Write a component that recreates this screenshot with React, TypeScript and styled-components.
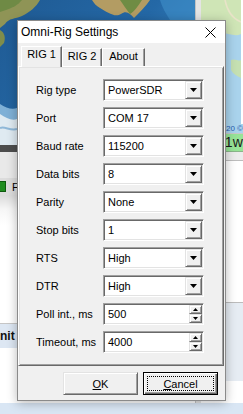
import styled, { createGlobalStyle } from "styled-components";

//types
type FieldKind = "combo" | "spin";
type FieldDef = {
  label: string;
  value: string;
  kind: FieldKind;
};

const fields: Array<FieldDef> = [
  { label: "Rig type", value: "PowerSDR", kind: "combo" },
  { label: "Port", value: "COM 17", kind: "combo" },
  { label: "Baud rate", value: "115200", kind: "combo" },
  { label: "Data bits", value: "8", kind: "combo" },
  { label: "Parity", value: "None", kind: "combo" },
  { label: "Stop bits", value: "1", kind: "combo" },
  { label: "RTS", value: "High", kind: "combo" },
  { label: "DTR", value: "High", kind: "combo" },
  { label: "Poll int., ms", value: "500", kind: "spin" },
  { label: "Timeout, ms", value: "4000", kind: "spin" },
];

const tabs = [
  { title: "RIG 1", width: 41, active: true },
  { title: "RIG 2", width: 40, active: false },
  { title: "About", width: 43, active: false },
];

//styles
const GlobalStyle = createGlobalStyle`
  html, body {
    margin: 0;
    padding: 0;
    background: #fff;
  }
  body {
    font-family: "Liberation Sans", Arial, sans-serif;
  }
`;

const Screen = styled.div`
  position: relative;
  width: 243px;
  height: 414px;
  overflow: hidden;
  display: flex;
  flex-direction: column;
  background: #fff;
`;
const Desk = styled.div`
  display: flex;
  height: 403px;
`;
const LeftPane = styled.div`
  width: 195px;
  display: flex;
  flex-direction: column;
`;
const Splitter = styled.div`
  width: 8px;
  background: #e4e4e4;
  border-left: 1px solid #c2c2c2;
  box-sizing: border-box;
`;
const RightPane = styled.div`
  flex: 1;
  display: flex;
  flex-direction: column;
`;
const MapArt = styled.svg`
  display: block;
  flex: none;
`;
const DarkBar = styled.div`
  height: 7px;
  background: #4d4d4d;
`;
const ToolArea = styled.div`
  height: 26px;
  background: #e9e9e9;
`;
const StatusRow = styled.div`
  height: 17px;
  display: flex;
  align-items: center;
  gap: 6px;
  background: #dcdcdc;
  font-size: 11px;
  color: #000;
`;
const LedBox = styled.span`
  width: 6px;
  height: 11px;
  box-sizing: border-box;
  background: #1f8c1f;
  border: 1px solid #0d5a0d;
  border-left: none;
`;
const ShadeArea = styled.div`
  height: 128px;
  background: linear-gradient(#dadada, #f6f6f6 14px, #fff 30px);
  border-bottom: 1px solid #c6c6c6;
`;
const InfoBand = styled.div<{ $h: number }>`
  height: ${(p) => p.$h}px;
  display: flex;
  align-items: center;
  background: #dde7f3;
  font-size: 12px;
  font-weight: bold;
  color: #111;
`;
const Blank = styled.div`
  flex: 1;
  background: #fff;
`;
const MapCaption = styled.div`
  height: 9px;
  background: #a9d3ec;
  padding-left: 16px;
  font-size: 8px;
  line-height: 9px;
  color: #2a5db0;
  white-space: nowrap;
`;
const GreenRow = styled.div`
  height: 19px;
  background: #e6e6e6;
  display: flex;
  align-items: stretch;
`;
const GreenCell = styled.div`
  margin-left: 16px;
  flex: 1;
  background: #97e497;
  border-top: 1px solid #c8c8c8;
  border-bottom: 1px solid #8ab58a;
  font-size: 14px;
  line-height: 17px;
  color: #1a1a1a;
  white-space: nowrap;
`;
const GreyStrip = styled.div`
  height: 8px;
  background: #ececec;
  border-bottom: 1px solid #bdbdbd;
`;
const WhiteGap = styled.div<{ $h: number }>`
  height: ${(p) => p.$h}px;
  background: #fff;
  border-bottom: 1px solid #bcbcbc;
`;
const PaleBand = styled.div`
  height: 78px;
  background: #e6ecf3;
`;
const BottomBand = styled.div`
  height: 11px;
  background: #d9e6f4;
`;

// dialog
const Dialog = styled.div`
  position: absolute;
  left: 17px;
  top: 20px;
  width: 209px;
  box-sizing: border-box;
  border: 1px solid #8a8a8a;
  background: #f0f0f0;
  box-shadow: 0 2px 10px rgba(0, 0, 0, 0.28);
  display: flex;
  flex-direction: column;
  font-family: "Liberation Sans", Arial, sans-serif;
  color: #000;
`;
const TitleBar = styled.div`
  height: 22px;
  background: #fff;
  display: flex;
  align-items: center;
  justify-content: space-between;
  padding: 0 9px 0 3px;
`;
const Title = styled.span`
  font-size: 12px;
  color: #000;
`;
const CloseIcon = styled.svg`
  display: block;
  margin-top: 1px;
`;
const TabStrip = styled.div`
  position: relative;
  z-index: 1;
  height: 23px;
  display: flex;
  align-items: flex-end;
  padding-left: 3px;
`;
const Tab = styled.div<{ $active: boolean; $w: number }>`
  box-sizing: border-box;
  width: ${(p) => p.$w}px;
  height: ${(p) => (p.$active ? 21 : 18)}px;
  margin-bottom: ${(p) => (p.$active ? -1 : 0)}px;
  border: 1px solid;
  border-bottom: none;
  border-color: #fff #696969 transparent #fff;
  box-shadow: inset -1px 0 #a0a0a0;
  background: #f0f0f0;
  font-size: 11px;
  line-height: 13px;
  padding-top: 1px;
  text-align: center;
`;
const PageBody = styled.div`
  box-sizing: border-box;
  height: 300px;
  margin-right: 1px;
  border: 1px solid;
  border-color: #fff #696969 #696969 #fff;
  box-shadow: inset 1px 1px #e3e3e3, inset -1px -1px #a0a0a0;
  padding: 12px 0 12px 17px;
  display: grid;
  grid-template-columns: 67px 101px;
  grid-auto-rows: 22px;
  row-gap: 6px;
  align-content: start;
`;
const Label = styled.span`
  font-size: 11px;
  display: flex;
  align-items: center;
  white-space: nowrap;
`;
const Field = styled.div`
  box-sizing: border-box;
  height: 22px;
  display: flex;
  align-items: center;
  background: #fff;
  border: 1px solid;
  border-color: #a0a0a0 #fff #fff #a0a0a0;
  box-shadow: inset 1px 1px #696969, inset -1px -1px #e3e3e3;
  padding: 0 1px 0 4px;
`;
const Value = styled.span`
  flex: 1;
  font-size: 11px;
  white-space: nowrap;
`;
const DropButton = styled.div`
  box-sizing: border-box;
  width: 17px;
  height: 18px;
  background: #f0f0f0;
  border: 1px solid;
  border-color: #e3e3e3 #696969 #696969 #e3e3e3;
  box-shadow: inset 1px 1px #fff, inset -1px -1px #a0a0a0;
  display: flex;
  align-items: center;
  justify-content: center;
`;
const SpinButtons = styled.div`
  width: 13px;
  height: 18px;
  display: flex;
  flex-direction: column;
`;
const SpinHalf = styled.div`
  box-sizing: border-box;
  flex: 1;
  background: #f0f0f0;
  border: 1px solid;
  border-color: #e3e3e3 #696969 #696969 #e3e3e3;
  box-shadow: inset 1px 1px #fff, inset -1px -1px #a0a0a0;
  display: flex;
  align-items: center;
  justify-content: center;
`;
const ButtonBar = styled.div`
  height: 34px;
  box-sizing: border-box;
  display: flex;
  justify-content: flex-end;
  align-items: flex-start;
  gap: 5px;
  padding: 6px 7px 0 0;
`;
const PushButton = styled.div<{ $default?: boolean }>`
  box-sizing: border-box;
  width: 75px;
  height: 23px;
  background: #f0f0f0;
  border: 1px solid;
  border-color: ${(p) =>
    p.$default ? "#000" : "#e3e3e3 #696969 #696969 #e3e3e3"};
  box-shadow: ${(p) =>
    p.$default
      ? "inset 1px 1px #fff, inset -1px -1px #696969, inset -2px -2px #a0a0a0"
      : "inset 1px 1px #fff, inset -1px -1px #a0a0a0"};
  padding: 3px;
  display: flex;
  font-size: 11px;
`;
const Caption = styled.span<{ $focus?: boolean }>`
  flex: 1;
  display: flex;
  align-items: center;
  justify-content: center;
  border: 1px dotted ${(p) => (p.$focus ? "#000" : "transparent")};
`;

function Arrow({ up, small }: { up?: boolean; small?: boolean }) {
  const w = small ? 5 : 7;
  const h = small ? 3 : 4;
  const pts = up ? `0,${h} ${w},${h} ${w / 2},0` : `0,0 ${w},0 ${w / 2},${h}`;
  return (
    <svg width={w} height={h} viewBox={`0 0 ${w} ${h}`}>
      <polygon points={pts} fill="#000" />
    </svg>
  );
}

function SatelliteMap() {
  return (
    <MapArt width={195} height={145} viewBox="0 0 195 145">
      <defs>
        <linearGradient id="sea" x1="0" y1="0" x2="1" y2="0.6">
          <stop offset="0" stopColor="#1f5a93" />
          <stop offset="0.6" stopColor="#2468a6" />
          <stop offset="1" stopColor="#3b86c2" />
        </linearGradient>
      </defs>
      <rect width="195" height="145" fill="url(#sea)" />
      <path d="M0 0H40C36 7 30 12 22 16C15 19 9 18 5 24L0 28Z" fill="#8f9456" />
      <path d="M0 0H22C18 5 12 8 6 10L0 12Z" fill="#6f8a45" />
      <path d="M0 30C4 32 6 37 4 43L0 47Z" fill="#7f8d4b" />
      <path d="M92 0H150C146 6 140 12 134 18C130 13 126 10 121 14C115 18 107 12 100 8C96 6 94 3 92 0Z" fill="#b39c63" />
      <path d="M120 0H142C138 6 134 12 130 14C126 9 123 4 120 0Z" fill="#6f8c44" />
      <path d="M160 0H195V20H170C166 14 162 7 160 0Z" fill="#3f8fc9" opacity="0.6" />
      <path d="M0 104C6 108 12 110 17 108V145H0Z" fill="#7fb0d6" />
      <path d="M0 114C6 118 12 121 17 119V145H0Z" fill="#dfeaf1" />
      <path d="M0 128C5 126 10 131 17 129" stroke="#8fb8d8" strokeWidth="2" fill="none" />
    </MapArt>
  );
}

function StreetMap() {
  return (
    <MapArt width={40} height={124} viewBox="0 0 40 124">
      <rect width="40" height="124" fill="#a9d3ec" />
      <path d="M0 0H40V34C32 38 24 30 16 35C10 38 5 33 0 30Z" fill="#cfe5b6" />
      <path d="M24 0C26 10 30 18 40 22" stroke="#e8e3c8" strokeWidth="1.5" fill="none" />
      <path d="M30 60C34 58 38 62 40 60V78C36 76 32 74 30 70Z" fill="#c5e0b2" />
    </MapArt>
  );
}

function FieldRow({ field }: { field: FieldDef }) {
  return (
    <>
      <Label>{field.label}</Label>
      <Field>
        <Value>{field.value}</Value>
        {field.kind === "combo" ? (
          <DropButton>
            <Arrow />
          </DropButton>
        ) : (
          <SpinButtons>
            <SpinHalf>
              <Arrow up small />
            </SpinHalf>
            <SpinHalf>
              <Arrow small />
            </SpinHalf>
          </SpinButtons>
        )}
      </Field>
    </>
  );
}

export default function App() {
  return (
    <Screen>
      <GlobalStyle />
      <Desk>
        <LeftPane>
          <SatelliteMap />
          <DarkBar />
          <ToolArea />
          <StatusRow>
            <LedBox />
            <span>F</span>
          </StatusRow>
          <ShadeArea />
          <InfoBand $h={24}>nit</InfoBand>
          <Blank />
        </LeftPane>
        <Splitter />
        <RightPane>
          <StreetMap />
          <MapCaption>2020 ©</MapCaption>
          <GreenRow>
            <GreenCell>01w</GreenCell>
          </GreenRow>
          <GreyStrip />
          <WhiteGap $h={141} />
          <PaleBand />
          <Blank />
        </RightPane>
      </Desk>
      <BottomBand />

      <Dialog>
        <TitleBar>
          <Title>Omni-Rig Settings</Title>
          <CloseIcon width={11} height={11} viewBox="0 0 11 11">
            <path d="M0.5 0.5L10.5 10.5M10.5 0.5L0.5 10.5" stroke="#000" strokeWidth="1" />
          </CloseIcon>
        </TitleBar>
        <TabStrip>
          {tabs.map((t) => (
            <Tab key={t.title} $active={t.active} $w={t.width}>
              {t.title}
            </Tab>
          ))}
        </TabStrip>
        <PageBody>
          {fields.map((f) => (
            <FieldRow key={f.label} field={f} />
          ))}
        </PageBody>
        <ButtonBar>
          <PushButton>
            <Caption>
              <u>O</u>K
            </Caption>
          </PushButton>
          <PushButton $default>
            <Caption $focus>
              <u>C</u>ancel
            </Caption>
          </PushButton>
        </ButtonBar>
      </Dialog>
    </Screen>
  );
}
